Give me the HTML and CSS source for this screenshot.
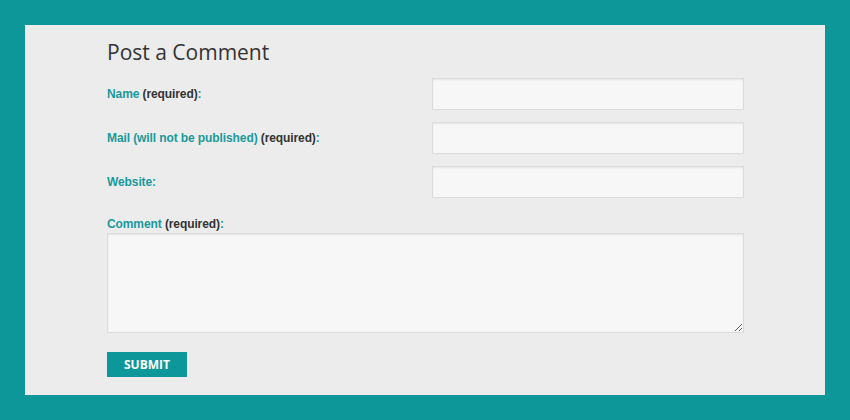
FILE: index.html
```html
<!DOCTYPE html>
<html lang="en">
<head>
    <meta charset="UTF-8">
    <meta name="viewport" content="width=device-width, initial-scale=1.0">
    <title>Post a Comment</title>
    <link rel="stylesheet" href="styles.css">
</head>
<body>
    <div class="container">
        <h2>Post a Comment</h2>
        <form id="comment-form">
            <div class="form-row">
                <label for="author">Name <span class="req">(required)</span>:</label>
                <input type="text" id="author">
            </div>
            <div class="form-row">
                <label for="email">Mail (will not be published) <span class="req">(required)</span>:</label>
                <input type="text" id="email">
            </div>
            <div class="form-row">
                <label for="url">Website:</label>
                <input type="text" id="url">
            </div>
            <div class="form-comment">
                <label for="comment">Comment <span class="req">(required)</span>:</label>
                <textarea id="comment"></textarea>
            </div>
            <button type="submit">Submit</button>
        </form>
    </div>
</body>
</html>
```

FILE: styles.css
```css
* {
    margin: 0;
    padding: 0;
    box-sizing: border-box;
}

body {
    background: #0e9799;
    padding: 25px;
    font-family: "Liberation Sans", Arial, sans-serif;
}

.container {
    width: 800px;
    height: 370px;
    background: #ececec;
    padding: 12px 81px 0 82px;
}

h2 {
    font-family: "Open Sans", sans-serif;
    font-weight: normal;
    font-size: 21px;
    line-height: 30px;
    color: #333;
    margin-bottom: 11px;
}

.form-row {
    display: flex;
    align-items: center;
    margin-bottom: 12px;
}

label {
    flex: 1;
    font-size: 12px;
    font-weight: bold;
    line-height: 15px;
    color: #1a9a9c;
    letter-spacing: -0.1px;
}

.req {
    color: #333;
}

input,
textarea {
    width: 312px;
    height: 32px;
    background: #f7f7f7;
    border: 1px solid #dcdcdc;
    box-shadow: inset 0 1px 2px rgba(0, 0, 0, 0.08);
    font-size: 13px;
    outline: none;
}

.form-comment {
    margin-top: 19px;
}

.form-comment label {
    display: block;
    margin-bottom: 1px;
}

textarea {
    display: block;
    width: 637px;
    height: 100px;
}

button {
    margin-top: 19px;
    width: 80px;
    height: 25px;
    background: #0e9799;
    color: #fff;
    border: none;
    font-family: "Open Sans", sans-serif;
    font-weight: bold;
    font-size: 12px;
    text-transform: uppercase;
    cursor: pointer;
}
```
